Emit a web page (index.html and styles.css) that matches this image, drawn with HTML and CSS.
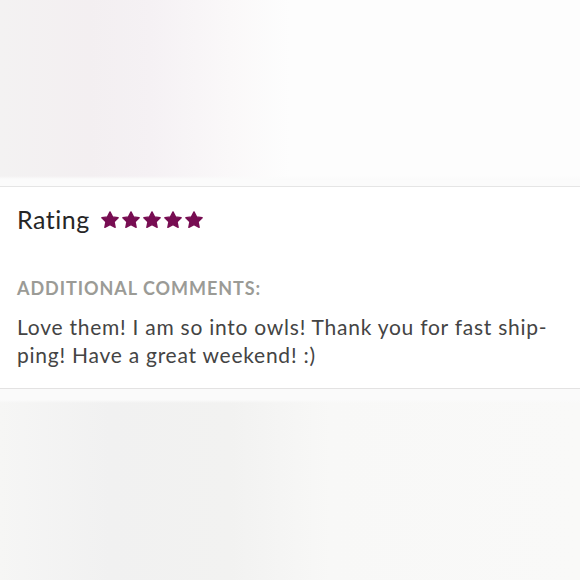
FILE: index.html
```html
<!DOCTYPE html>
<html lang="en">
<head>
<meta charset="utf-8">
<link rel="stylesheet" href="styles.css">
</head>
<body>
<div class="page">
  <div class="photo-top"></div>
  <section class="review">
    <div class="rating-row">
      <h2 class="rating-label">Rating</h2>
      <div class="stars">
        <svg class="star" viewBox="0 0 24 24"><path d="M12 2.2L15.06 8.29L21.8 9.2L16.95 14.11L18.2 20.8L12 17.7L5.8 20.8L7.05 14.11L2.2 9.2L8.94 8.29Z"/></svg>
        <svg class="star" viewBox="0 0 24 24"><path d="M12 2.2L15.06 8.29L21.8 9.2L16.95 14.11L18.2 20.8L12 17.7L5.8 20.8L7.05 14.11L2.2 9.2L8.94 8.29Z"/></svg>
        <svg class="star" viewBox="0 0 24 24"><path d="M12 2.2L15.06 8.29L21.8 9.2L16.95 14.11L18.2 20.8L12 17.7L5.8 20.8L7.05 14.11L2.2 9.2L8.94 8.29Z"/></svg>
        <svg class="star" viewBox="0 0 24 24"><path d="M12 2.2L15.06 8.29L21.8 9.2L16.95 14.11L18.2 20.8L12 17.7L5.8 20.8L7.05 14.11L2.2 9.2L8.94 8.29Z"/></svg>
        <svg class="star" viewBox="0 0 24 24"><path d="M12 2.2L15.06 8.29L21.8 9.2L16.95 14.11L18.2 20.8L12 17.7L5.8 20.8L7.05 14.11L2.2 9.2L8.94 8.29Z"/></svg>
      </div>
    </div>
    <h3 class="comments-label">Additional Comments:</h3>
    <p class="comment">Love them! I am so into owls! Thank you for fast ship-<br>ping! Have a great weekend! :)</p>
  </section>
  <div class="photo-bottom"></div>
</div>
</body>
</html>
```
FILE: styles.css
```css
* { box-sizing: border-box; }
html, body { margin: 0; padding: 0; }
body {
  width: 580px;
  height: 580px;
  overflow: hidden;
  background: #f5f4f4;
  font-family: Lato, "Open Sans", sans-serif;
}
.page {
  display: flex;
  flex-direction: column;
  height: 580px;
}
.photo-top {
  height: 186px;
  flex: none;
  background:
    linear-gradient(180deg, rgba(255,255,255,0) 0, rgba(255,255,255,0) 176px, #fbfbfb 179px, #fbfbfb 186px),
    linear-gradient(90deg, #f3f2f2 0, #f3eff1 90px, #f5f1f4 150px, #faf8f9 230px, #fdfdfd 290px, #fdfdfd 580px);
}
.review {
  flex: none;
  background: #fff;
  border-top: 1px solid #e5e5e5;
  border-bottom: 1px solid #e3e2e2;
  padding: 17px 17px 0 17px;
  height: 203px;
}
.rating-row {
  display: flex;
  align-items: center;
  gap: 10px;
  height: 30px;
}
.rating-label {
  margin: 0;
  font-size: 25px;
  font-weight: 400;
  color: #262626;
  line-height: 30px;
  letter-spacing: 0.5px;
}
.stars {
  display: flex;
  gap: 1px;
  margin-top: 1px;
}
.star {
  width: 20px;
  height: 20px;
  fill: #770d52;
  stroke: #770d52;
  stroke-width: 1.6;
  stroke-linejoin: round;
}
.comments-label {
  margin: 43px 0 0 0;
  font-size: 18px;
  font-weight: 700;
  text-transform: uppercase;
  color: #9b9b96;
  line-height: 22px;
  letter-spacing: 0.95px;
}
.comment {
  margin: 14px 0 0 0;
  font-size: 21px;
  line-height: 28px;
  color: #444;
  letter-spacing: 0.75px;
}
.photo-bottom {
  flex: 1;
  background:
    linear-gradient(180deg, #fafafa 0, #fafafa 11px, rgba(250,250,250,0) 14px),
    linear-gradient(90deg, #f6f6f5 0, #f1f1f1 110px, #f2f2f1 230px, #f8f8f7 330px, #f9f9f8 580px);
}
```
